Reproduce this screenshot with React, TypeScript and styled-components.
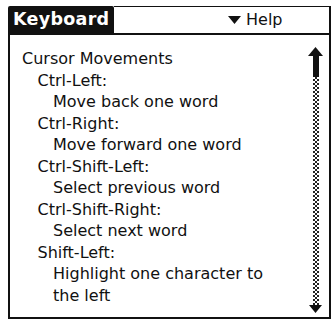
import React from "react";
import styled, { createGlobalStyle } from "styled-components";

const Global = createGlobalStyle`
  html, body {
    margin: 0;
    padding: 0;
    background: #fff;
  }
  body {
    font-family: "DejaVu Sans", sans-serif;
    color: #111;
  }
`;

type Line = { text: string; level: number };

const lines: Line[] = [
  { text: "Cursor Movements", level: 0 },
  { text: "Ctrl-Left:", level: 1 },
  { text: "Move back one word", level: 2 },
  { text: "Ctrl-Right:", level: 1 },
  { text: "Move forward one word", level: 2 },
  { text: "Ctrl-Shift-Left:", level: 1 },
  { text: "Select previous word", level: 2 },
  { text: "Ctrl-Shift-Right:", level: 1 },
  { text: "Select next word", level: 2 },
  { text: "Shift-Left:", level: 1 },
  { text: "Highlight one character to", level: 2 },
  { text: "the left", level: 2 },
];

function App() {
  return (
    <>
      <Global />
      <Frame>
        <Header>
          <TitleTab>Keyboard</TitleTab>
          <MenuArea>
            <MenuTrigger>
              <svg width="13" height="8" viewBox="0 0 13 8">
                <path d="M0 0 H13 L6.5 8 Z" fill="#111" />
              </svg>
              Help
            </MenuTrigger>
          </MenuArea>
        </Header>
        <Body>
          <TextList>
            {lines.map((l, i) => (
              <Row key={i} level={l.level}>
                {l.text}
              </Row>
            ))}
          </TextList>
          <ScrollBar>
            <svg width="15" height="30" viewBox="0 0 15 30">
              <path d="M7.5 0 L15 9 H0 Z" fill="#111" />
              <rect x="5" y="9" width="6" height="21" fill="#111" />
            </svg>
            <Track />
            <svg width="13" height="8" viewBox="0 0 13 8">
              <path d="M0 0 H13 L6.5 8 Z" fill="#111" />
            </svg>
          </ScrollBar>
        </Body>
      </Frame>
    </>
  );
}

const Frame = styled.div`
  margin: 6px 0 0 8px;
  width: 323px;
  height: 313px;
  display: flex;
  flex-direction: column;
  box-sizing: border-box;
`;

const Header = styled.div`
  display: flex;
  height: 29px;
  box-sizing: border-box;
  border-bottom: 2px solid #111;
`;

const TitleTab = styled.div`
  width: 106px;
  background: #111;
  color: #fff;
  font-weight: bold;
  font-size: 17.5px;
  letter-spacing: 0.3px;
  line-height: 27px;
  padding-left: 5px;
  box-sizing: border-box;
  border-radius: 2px 2px 0 0;
  white-space: nowrap;
`;

const MenuArea = styled.div`
  flex: 1;
  display: flex;
  align-items: center;
  padding-left: 114px;
  border-top: 1px solid #111;
  border-right: 2px solid #111;
`;

const MenuTrigger = styled.div`
  display: flex;
  align-items: center;
  gap: 5px;
  font-size: 16px;
  line-height: 20px;
`;

const Body = styled.div`
  flex: 1;
  display: flex;
  border-left: 2px solid #111;
  border-right: 2px solid #111;
  border-bottom: 2px solid #111;
`;

const TextList = styled.div`
  flex: 1;
  padding: 13px 0 0 12px;
`;

const Row = styled.div<{ level: number }>`
  padding-left: ${(p) => p.level * 15.5}px;
  font-size: 16px;
  line-height: 21.5px;
  white-space: nowrap;
`;

const ScrollBar = styled.div`
  width: 15px;
  margin: 12px 6px 4px 0;
  display: flex;
  flex-direction: column;
  align-items: center;
`;

const Track = styled.div`
  flex: 1;
  width: 6px;
  background: repeating-conic-gradient(#222 0 25%, #fff 0 50%) 0 0 / 4px 4px;
`;

export default App;
